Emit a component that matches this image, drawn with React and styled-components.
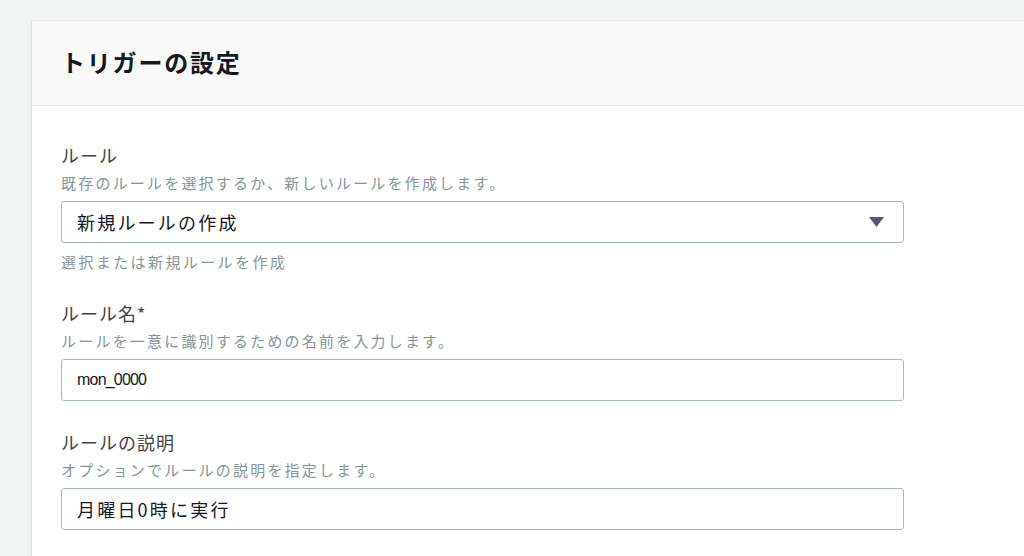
import React from "react";
import styled, { createGlobalStyle } from "styled-components";

const GlobalStyle = createGlobalStyle`
  html, body {
    margin: 0;
    padding: 0;
    background: #f2f3f3;
    font-family: "Noto Sans CJK JP", "Liberation Sans", sans-serif;
    overflow: hidden;
  }
`;

const Page = styled.div`
  padding: 20px 0 0 31px;
  height: 556px;
  box-sizing: border-box;
`;

const Card = styled.section`
  background: #ffffff;
  border-left: 1px solid #dfe2e2;
  border-top: 1px solid #e6e8e8;
  box-shadow: 0 1px 1px rgba(0, 28, 36, 0.2);
  height: 100%;
`;

const Header = styled.header`
  height: 84px;
  display: flex;
  align-items: center;
  padding: 0 29px;
  background: #fafafa;
  border-bottom: 1px solid #eaeded;
`;

const Title = styled.h2`
  margin: 0 0 2px;
  font-size: 24px;
  font-weight: 700;
  color: #16191f;
  letter-spacing: 1.8px;
  line-height: 30px;
`;

const Body = styled.div`
  padding: 38px 29px 0;
  width: 843px;
  display: flex;
  flex-direction: column;
  gap: 30px;
`;

const Field = styled.div`
  display: flex;
  flex-direction: column;
`;

const Label = styled.div`
  font-size: 18px;
  line-height: 22px;
  letter-spacing: 1px;
  color: #3f4447;
`;

const Desc = styled.div`
  font-size: 15px;
  line-height: 22px;
  letter-spacing: 2.2px;
  color: #879596;
  margin-top: 6px;
  margin-bottom: 7px;
  white-space: nowrap;
`;

const Hint = styled.div`
  font-size: 15px;
  line-height: 20px;
  letter-spacing: 2.4px;
  color: #879596;
  margin-top: 9px;
`;

const Box = styled.div`
  height: 42px;
  box-sizing: border-box;
  border: 1px solid #aab7b8;
  border-radius: 3px;
  display: flex;
  align-items: center;
  justify-content: space-between;
  padding: 0 19px 0 15px;
  font-family: ${(p) =>
    p.$latin ? `"Liberation Sans", "Noto Sans CJK JP", sans-serif` : "inherit"};
  font-size: ${(p) => (p.$latin ? "16px" : "18px")};
  letter-spacing: ${(p) => (p.$latin ? "-0.8px" : "2.2px")};
  color: #16191f;
  background: #fff;
`;

const Caret = () => (
  <svg width="15" height="11" viewBox="0 0 15 11">
    <polygon points="0,0 15,0 7.5,10" fill="#545b64" />
  </svg>
);

export default function App() {
  return (
    <>
      <GlobalStyle />
      <Page>
        <Card>
          <Header>
            <Title>トリガーの設定</Title>
          </Header>
          <Body>
            <Field>
              <Label>ルール</Label>
              <Desc>既存のルールを選択するか、新しいルールを作成します。</Desc>
              <Box>
                <span>新規ルールの作成</span>
                <Caret />
              </Box>
              <Hint>選択または新規ルールを作成</Hint>
            </Field>
            <Field>
              <Label>ルール名*</Label>
              <Desc>ルールを一意に識別するための名前を入力します。</Desc>
              <Box $latin>mon_0000</Box>
            </Field>
            <Field>
              <Label>ルールの説明</Label>
              <Desc>オプションでルールの説明を指定します。</Desc>
              <Box>月曜日0時に実行</Box>
            </Field>
          </Body>
        </Card>
      </Page>
    </>
  );
}
